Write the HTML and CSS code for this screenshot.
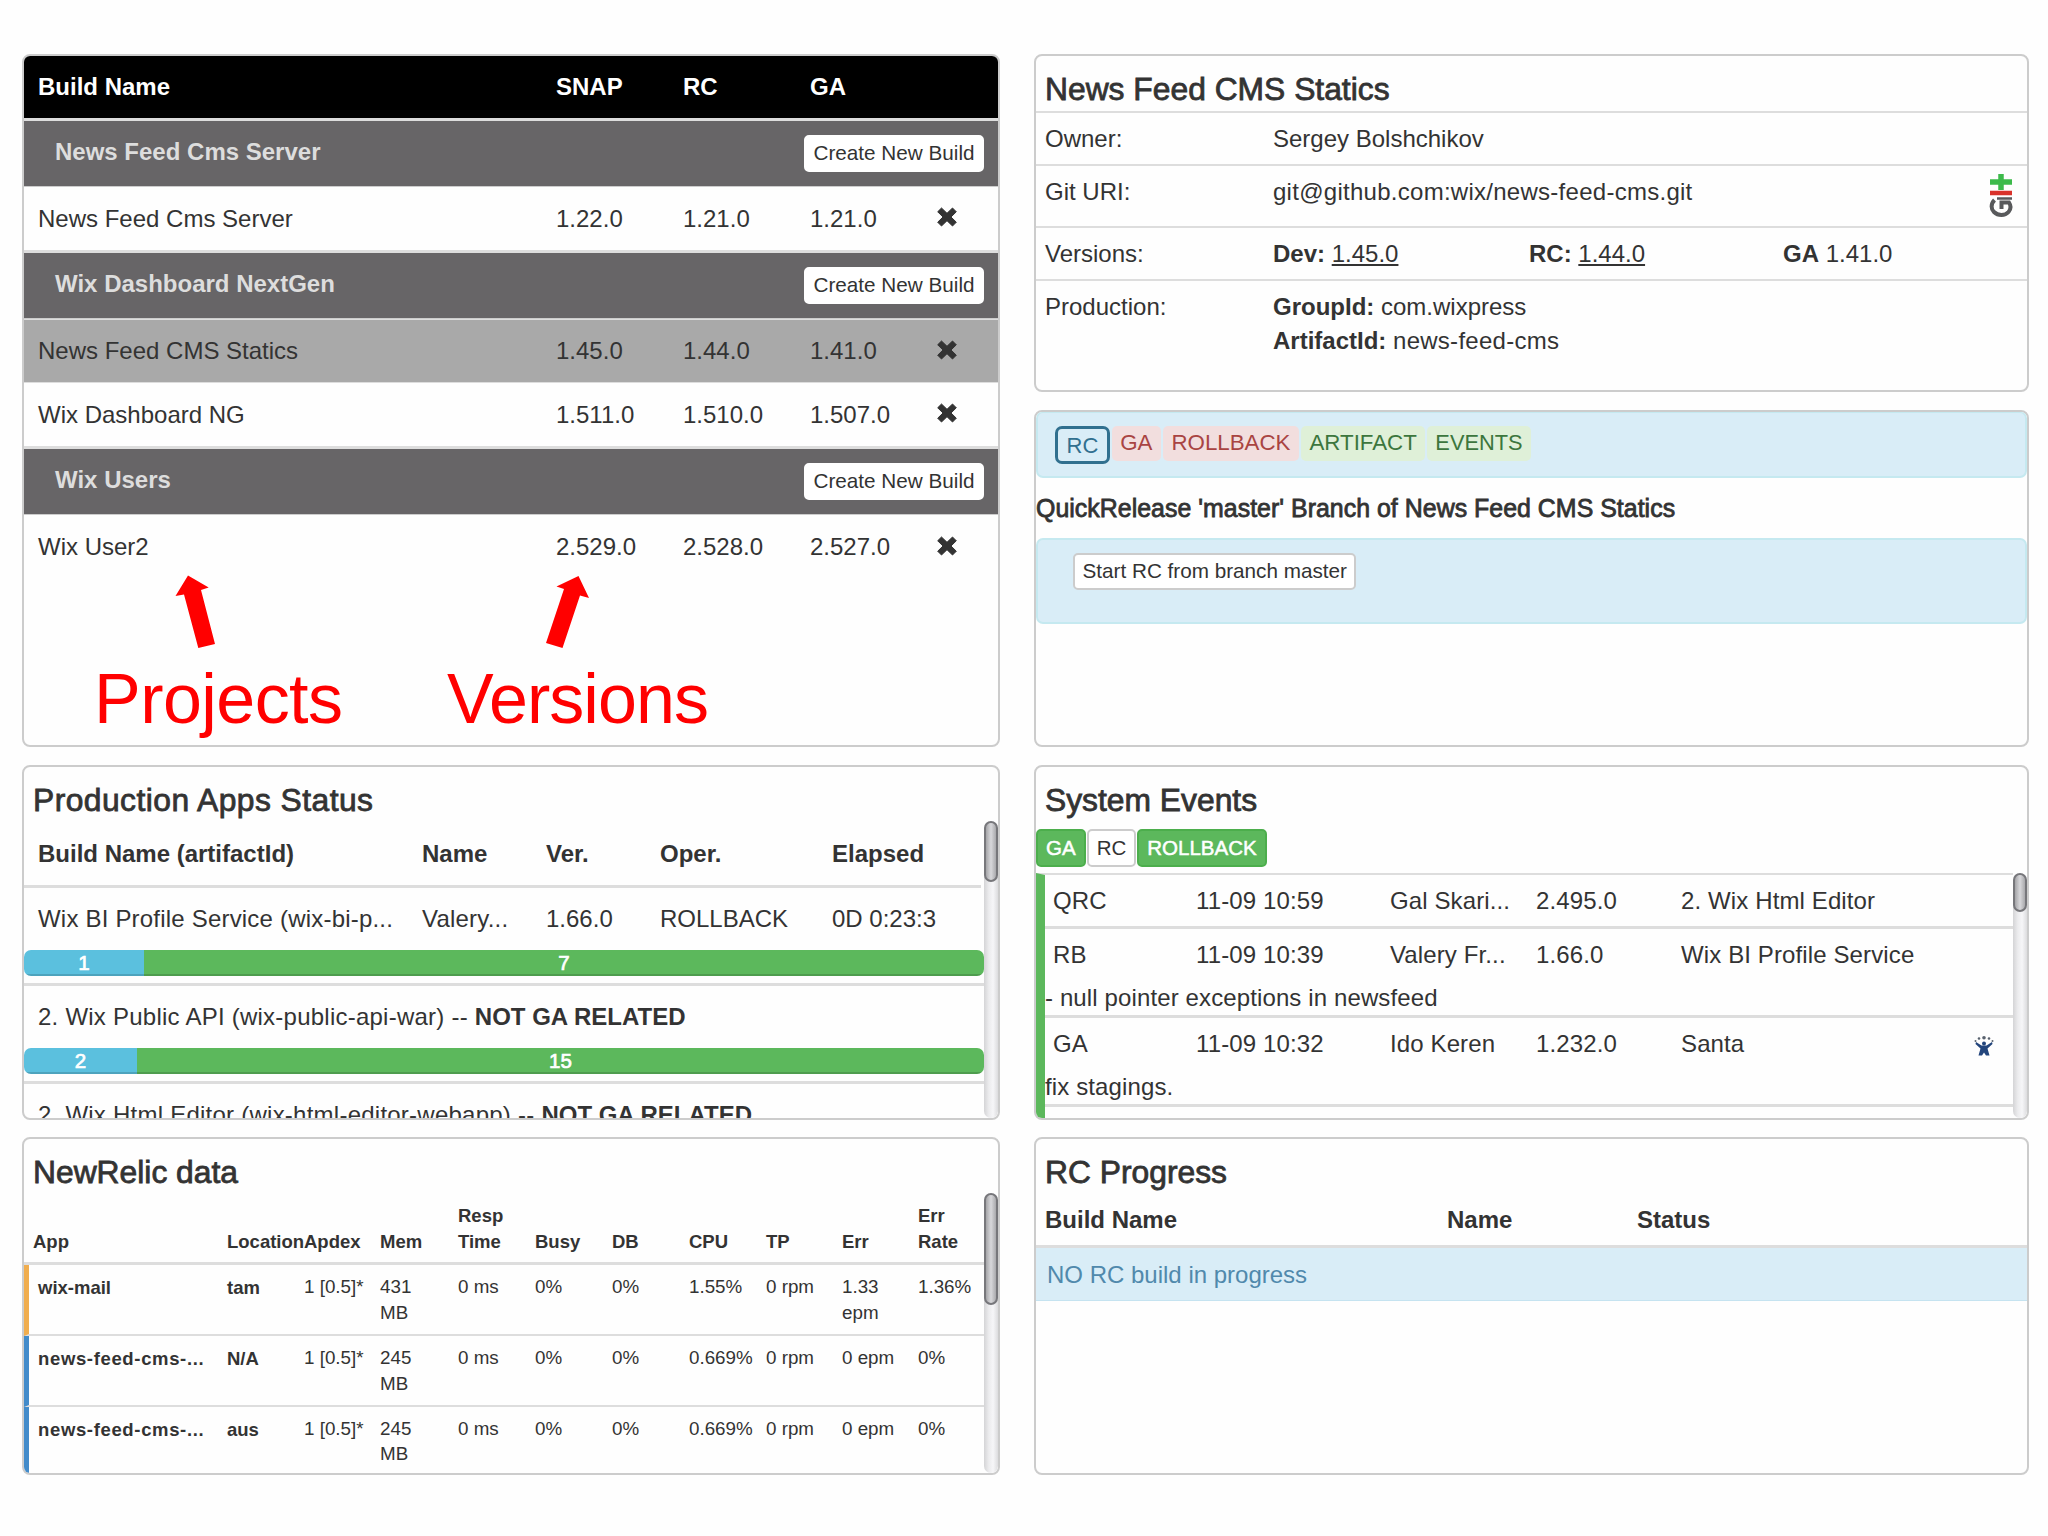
FILE: index.html
```
<!DOCTYPE html>
<html>

<head>
  <meta charset="utf-8">
  <title>Build Dashboard</title>
  <link rel="stylesheet" href="styles.css">
</head>

<body>
  <svg width="0" height="0" class="defs">
    <symbol id="remove" viewBox="0 0 20 20">
      <path d="M4.5 1 L10 6.3 L15.5 1 L19.3 4.8 L14 10 L19.3 15.2 L15.5 19 L10 13.7 L4.5 19 L0.7 15.2 L6 10 L0.7 4.8 Z" fill="#333" stroke="#333" stroke-linejoin="round" />
    </symbol>
  </svg>

  <div id="dashboard">
    <div class="column">
      <div class="panel builds">
        <div class="build-row head">
          <b>Build Name</b><b>SNAP</b><b>RC</b><b>GA</b>
        </div>
        <div class="group">
          <b>News Feed Cms Server</b>
          <button class="btn">Create New Build</button>
        </div>
        <div class="build-row">
          <span>News Feed Cms Server</span><span>1.22.0</span><span>1.21.0</span><span>1.21.0</span>
          <svg class="remove"><use href="#remove" /></svg>
        </div>
        <div class="group">
          <b>Wix Dashboard NextGen</b>
          <button class="btn">Create New Build</button>
        </div>
        <div class="build-row active">
          <span>News Feed CMS Statics</span><span>1.45.0</span><span>1.44.0</span><span>1.41.0</span>
          <svg class="remove"><use href="#remove" /></svg>
        </div>
        <div class="build-row">
          <span>Wix Dashboard NG</span><span>1.511.0</span><span>1.510.0</span><span>1.507.0</span>
          <svg class="remove"><use href="#remove" /></svg>
        </div>
        <div class="group">
          <b>Wix Users</b>
          <button class="btn">Create New Build</button>
        </div>
        <div class="build-row last">
          <span>Wix User2</span><span>2.529.0</span><span>2.528.0</span><span>2.527.0</span>
          <svg class="remove"><use href="#remove" /></svg>
        </div>

        <!-- callouts over the empty part of the list -->
        <svg class="callouts" viewBox="0 0 972 180">
          <g fill="#f00">
            <path d="M163 10.5 L183.7 22.5 L176 25 L190 79 L173.300 83 L159 29.500 L150.500 31 Z" />
            <path d="M553.5 11 L564 33 L555 30.500 L537.500 83 L521 78 L539 24 L531.500 21.500 Z" />
            <text x="69" y="158" textLength="249">Projects</text>
            <text x="422" y="158" textLength="262">Versions</text>
          </g>
        </svg>
      </div>

      <div class="panel apps">
        <h3>Production Apps Status</h3>
        <div class="scroll">
          <div class="content">
            <div class="app-row head">
              <b>Build Name (artifactId)</b><b>Name</b><b>Ver.</b><b>Oper.</b><b>Elapsed</b>
            </div>
            <div class="app-row">
              <span class="name">Wix BI Profile Service (wix-bi-p...</span><span class="name">Valery...</span><span>1.66.0</span><span>ROLLBACK</span><span>0D 0:23:3</span>
            </div>
            <div class="progress">
              <div class="bar info" style="width: 12.5%">1</div>
              <div class="bar success" style="width: 87.5%">7</div>
            </div>
            <div class="app-line">2. Wix Public API (wix-public-api-war) -- <b>NOT GA RELATED</b></div>
            <div class="progress">
              <div class="bar info" style="width: 11.76%">2</div>
              <div class="bar success" style="width: 88.24%">15</div>
            </div>
            <div class="app-line">2. Wix Html Editor (wix-html-editor-webapp) -- <b>NOT GA RELATED</b></div>
          </div>
          <div class="scrollbar"><div class="thumb"></div></div>
        </div>
      </div>

      <div class="panel relic">
        <h3>NewRelic data</h3>
        <div class="scroll">
          <div class="content">
            <div class="relic-row head">
              <b>App</b><b>Location</b><b>Apdex</b><b>Mem</b><b>Resp<br>Time</b><b>Busy</b><b>DB</b><b>CPU</b><b>TP</b><b>Err</b><b>Err<br>Rate</b>
            </div>
            <div class="relic-row warning">
              <b>wix-mail</b><b>tam</b><span>1 [0.5]*</span><span>431<br>MB</span><span>0 ms</span><span>0%</span><span>0%</span><span>1.55%</span><span>0 rpm</span><span>1.33<br>epm</span><span>1.36%</span>
            </div>
            <div class="relic-row">
              <b class="long">news-feed-cms-...</b><b>N/A</b><span>1 [0.5]*</span><span>245<br>MB</span><span>0 ms</span><span>0%</span><span>0%</span><span>0.669%</span><span>0 rpm</span><span>0 epm</span><span>0%</span>
            </div>
            <div class="relic-row">
              <b class="long">news-feed-cms-...</b><b>aus</b><span>1 [0.5]*</span><span>245<br>MB</span><span>0 ms</span><span>0%</span><span>0%</span><span>0.669%</span><span>0 rpm</span><span>0 epm</span><span>0%</span>
            </div>
          </div>
          <div class="scrollbar"><div class="thumb"></div></div>
        </div>
      </div>
    </div>

    <div class="column">
      <div class="panel details">
        <h3>News Feed CMS Statics</h3>
        <div class="detail">
          <span>Owner:</span><span>Sergey Bolshchikov</span>
        </div>
        <div class="detail git">
          <span>Git URI:</span><span class="uri">git@github.com:wix/news-feed-cms.git</span>
          <svg class="git-icon" viewBox="0 0 24 44">
            <path d="M12 0 V16 M1 8 H23" stroke="#3dba4b" stroke-width="5.500" />
            <path d="M1 19 H23" stroke="#d9322b" stroke-width="4.500" />
            <path d="M5.500 26 C1.500 30 2 35 5 38 C9 42 16 42 19.500 38 C22 35 22 31.500 20 28.500 H12.500 V35" fill="none" stroke="#58595b" stroke-width="4" />
            <path d="M8 24.500 H23" stroke="#58595b" stroke-width="2.500" />
          </svg>
        </div>
        <div class="detail versions">
          <span>Versions:</span><span><b>Dev:</b> <u>1.45.0</u></span><span><b>RC:</b> <u>1.44.0</u></span><span><b>GA</b> 1.41.0</span>
        </div>
        <div class="detail">
          <span>Production:</span>
          <span><b>GroupId:</b> com.wixpress<br><b>ArtifactId:</b> <span class="uri">news-feed-cms</span></span>
        </div>
      </div>

      <div class="panel release">
        <div class="alert tabs">
          <span class="tab current">RC</span>
          <span class="tab danger">GA</span>
          <span class="tab danger">ROLLBACK</span>
          <span class="tab ok">ARTIFACT</span>
          <span class="tab ok">EVENTS</span>
        </div>
        <h4>QuickRelease 'master' Branch of News Feed CMS Statics</h4>
        <div class="alert start">
          <button class="btn">Start RC from branch master</button>
        </div>
      </div>

      <div class="panel events">
        <h3>System Events</h3>
        <div class="filters">
          <button class="btn on">GA</button>
          <button class="btn">RC</button>
          <button class="btn on">ROLLBACK</button>
        </div>
        <div class="scroll">
          <div class="content">
            <div class="event">
              <div class="event-row"><span>QRC</span><span>11-09 10:59</span><span>Gal Skari...</span><span>2.495.0</span><span>2. Wix Html Editor</span></div>
            </div>
            <div class="event">
              <div class="event-row"><span>RB</span><span>11-09 10:39</span><span>Valery Fr...</span><span>1.66.0</span><span>Wix BI Profile Service</span></div>
              <p>- null pointer exceptions in newsfeed</p>
            </div>
            <div class="event">
              <div class="event-row"><span>GA</span><span>11-09 10:32</span><span>Ido Keren</span><span>1.232.0</span><span>Santa</span>
                <svg class="jira" viewBox="0 0 20 20">
                  <g fill="#59626e">
                    <circle cx="1.500" cy="5" r="1" />
                    <circle cx="5" cy="2.500" r="1.300" />
                    <circle cx="10" cy="1.800" r="1.800" />
                    <circle cx="15" cy="2.500" r="1.300" />
                    <circle cx="18.500" cy="5" r="1" />
                  </g>
                  <g fill="#23457c">
                    <circle cx="10" cy="7.500" r="2" />
                    <path d="M2 6 L7.500 9.500 H12.500 L18 6 L18.500 8 L13.500 12.500 L15.500 19.500 H12 L10 16.500 L8 19.500 H4.500 L6.500 12.500 L1.500 8 Z" />
                  </g>
                </svg>
              </div>
              <p>fix stagings.</p>
            </div>
          </div>
          <div class="scrollbar"><div class="thumb"></div></div>
        </div>
      </div>

      <div class="panel rc">
        <h3>RC Progress</h3>
        <div class="rc-row">
          <b>Build Name</b><b>Name</b><b>Status</b>
        </div>
        <div class="rc-empty">NO RC build in progress</div>
      </div>
    </div>
  </div>
</body>

</html>
```
FILE: styles.css
```
* {
  box-sizing: border-box;
}

body {
  margin: 0px;
  background-color: #fefefe;
  font-family: "Liberation Sans", Arial, sans-serif;
  font-size: 24px;
  line-height: 34px;
  color: #333;
  overflow: hidden;
}

.defs {
  position: absolute;
}

#dashboard {
  display: grid;
  grid-template-columns: 978px 995px;
  column-gap: 34px;
  padding: 54px 0 0 22px;
}

.column {
  display: flex;
  flex-direction: column;
  gap: 18px;
}

.panel {
  position: relative;
  display: flex;
  flex-direction: column;
  border: 2px solid #ccc;
  border-radius: 8px;
  overflow: hidden;
  white-space: nowrap;
}

h3 {
  flex: none;
  margin: 0px;
  padding: 13px 9px 0;
  font-size: 31.8px;
  font-weight: normal;
  line-height: 41px;
  -webkit-text-stroke: 0.8px #333;
}

h4 {
  margin: 0px;
  font-size: 24.9px;
  font-weight: normal;
  line-height: 61px;
  height: 60px;
  letter-spacing: 0.03px;
  -webkit-text-stroke: 0.8px #333;
}

.btn {
  font-family: inherit;
  font-size: 20.7px;
  line-height: 28px;
  height: 37px;
  color: #333;
  background-color: white;
  border: 2px solid #ccc;
  border-radius: 5px;
  padding: 1px 7.5px 3px;
}

/* builds */

.builds {
  height: 693px;
}

.build-row {
  display: grid;
  grid-template-columns: 518px 127px 127px 127px 40px;
  align-items: center;
  padding-left: 14px;
  height: 66px;
  border-bottom: 3px solid #ddd;
}

.build-row.head {
  height: 65px;
  color: white;
  background-color: black;
}

.build-row.active {
  height: 64px;
  background-color: #a9a9a9;
  border-top: 1px solid #ddd;
  border-bottom-width: 1px;
}

.build-row.last {
  height: 64px;
  border-bottom: none;
}

.group {
  display: flex;
  align-items: center;
  justify-content: space-between;
  height: 66px;
  padding: 0 14px 0 31px;
  color: #ddd;
  background-color: #676567;
  border-bottom: 1px solid #ccc;
}

.group b {
  margin-bottom: 4px;
}

.group .btn {
  border-color: #fff;
}

.remove {
  width: 20px;
  height: 20px;
  margin: 0 0 3px;
}

.callouts {
  position: absolute;
  left: 1px;
  top: 509px;
  width: 972px;
  height: 180px;
}

.callouts text {
  font-size: 70px;
}

/* tables with a scrollbar */

.scroll {
  display: flex;
  flex: 1;
  min-height: 0;
}

.content {
  flex: 1;
  overflow: hidden;
}

.scrollbar {
  width: 14px;
  border-radius: 7px;
  background: linear-gradient(to right, #d4d4d6, #ececee 35%, #f6f6f8 65%, #dcdcde);
}

.thumb {
  height: 61px;
  border: 2px solid #77777b;
  border-radius: 7px;
  background: linear-gradient(to right, #a5a5a8, #d8d8db 50%, #a9a9ac);
}

/* production apps */

.apps {
  height: 355px;
}

.apps h3 {
  letter-spacing: 0.45px;
}

.app-row {
  display: grid;
  grid-template-columns: 384px 124px 114px 172px auto;
  align-items: center;
  padding-left: 14px;
  height: 62px;
}

.app-row.head {
  height: 67px;
  margin-right: 3px;
  padding-top: 2px;
  border-bottom: 3px solid #ddd;
}

.name {
  letter-spacing: 0.2px;
}

.app-line {
  height: 72px;
  padding: 14px 0 0 14px;
  margin-top: 7px;
  letter-spacing: 0.24px;
  border-top: 3px solid #ddd;
}

.app-line b {
  letter-spacing: 0;
}

.progress {
  display: flex;
  height: 26px;
  border-radius: 7px;
  overflow: hidden;
}

.app-line + .progress {
  margin-top: -7px;
}

.bar {
  color: white;
  font-size: 20.5px;
  line-height: 26px;
  text-align: center;
  -webkit-text-stroke: 0.7px white;
  box-shadow: inset 0 -2px 0 rgba(0, 0, 0, 0.15);
}

.info {
  background-color: #5bc0de;
}

.success {
  background-color: #5cb85c;
}

/* new relic */

.relic {
  height: 338px;
  margin-top: -1px;
}

.relic-row {
  display: grid;
  grid-template-columns: 189px 77px 76px 78px 77px 77px 77px 77px 76px 76px auto;
  height: 70.5px;
  padding: 9px 0 0 9px;
  font-size: 18.8px;
  line-height: 25.5px;
  border-left: 5px solid #428bca;
  border-bottom: 2px solid #ddd;
}

.relic-row b {
  font-size: 18.5px;
  padding-top: 1px;
}

.relic-row .long {
  letter-spacing: 0.65px;
}

.relic-row.warning {
  height: 71px;
  border-left-color: #f0ad4e;
}

.relic-row.head {
  grid-template-columns: 194px 77px 76px 78px 77px 77px 77px 77px 76px 76px auto;
  align-items: end;
  height: 72px;
  padding: 0 0 8px 9px;
  border-left: none;
  border-bottom: 3px solid #ddd;
}

.relic .thumb {
  height: 112px;
}

/* details */

.details {
  height: 338px;
}

.detail {
  display: grid;
  grid-template-columns: 228px 1fr;
  height: 53px;
  padding: 9px 9px 0;
  border-top: 2px solid #ddd;
}

.detail:last-child {
  height: auto;
}

.details h3 {
  padding-bottom: 1px;
}

.git {
  grid-template-columns: 228px 1fr 24px;
  padding-right: 14px;
  height: 62px;
}

.uri {
  letter-spacing: 0.27px;
}

.git-icon {
  width: 24px;
  height: 44px;
  margin-top: -1px;
}

.versions {
  grid-template-columns: 228px 256px 254px 1fr;
}

/* release */

.release {
  height: 337px;
}

.alert {
  background-color: #d9edf7;
  border: 2px solid #c5e9f0;
  border-radius: 7px;
}

.tabs {
  display: flex;
  align-items: flex-start;
  gap: 2px;
  height: 67px;
  margin-top: -1px;
  padding: 13px 0 0 17px;
}

.tab {
  height: 35px;
  padding: 0 8.5px;
  font-size: 22.3px;
  line-height: 33px;
  border-radius: 5px;
}

.current {
  height: 38px;
  padding: 0 8.5px;
  font-size: 22px;
  line-height: 33px;
  color: #31708f;
  border: 3px solid #31708f;
  border-radius: 7px;
}

.danger {
  color: #a94442;
  background-color: #f2dede;
}

.ok {
  color: #3c763d;
  background-color: #dff0d8;
}

.ok:last-child {
  font-size: 21.8px;
  padding: 0 8px;
}

.start {
  height: 86px;
  padding: 13px 0 0 35px;
}

.start .btn {
  padding-bottom: 2px;
}

/* events */

.events {
  height: 355px;
}

.filters {
  display: flex;
  gap: 1px;
  padding: 8px 0 6px;
}

.filters .btn {
  height: 38px;
  padding: 1px 8px 2px;
  font-size: 20.5px;
}

.filters .on {
  color: white;
  background-color: #5cb85c;
  border-color: #4cae4c;
  -webkit-text-stroke: 0.5px white;
}

.events .content {
  letter-spacing: 0.12px;
  border-top: 2px solid #ddd;
  border-left: 9px solid #5cb85c;
}

.event {
  border-bottom: 3px solid #ddd;
}

.event-row {
  display: grid;
  grid-template-columns: 143px 194px 146px 145px 293px auto;
  align-items: center;
  height: 51px;
  padding-left: 8px;
}

.event p {
  margin: 0px;
  height: 35px;
  line-height: 36px;
}

.jira {
  width: 20px;
  height: 20px;
  margin-top: 5px;
}

.events .thumb {
  height: 39px;
}

/* rc progress */

.rc {
  height: 338px;
  margin-top: -1px;
}

.rc-row {
  display: grid;
  grid-template-columns: 402px 190px auto;
  align-items: center;
  height: 55px;
  padding: 1px 0 0 9px;
  border-bottom: 3px solid #ddd;
}

.rc-empty {
  height: 53px;
  padding-left: 11px;
  line-height: 53px;
  color: #5089ac;
  background-color: #d9edf7;
  border-bottom: 1px solid #c5e3f0;
}
```
